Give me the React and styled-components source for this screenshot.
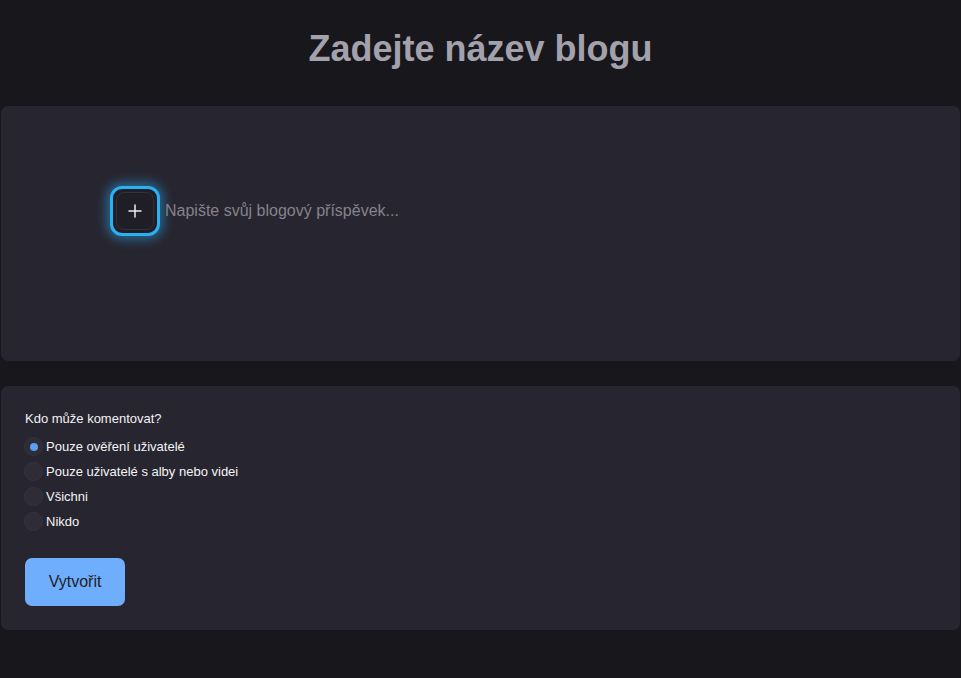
import React, { useState } from 'react';
import styled, { createGlobalStyle, css } from 'styled-components';

const GlobalStyle = createGlobalStyle`
    body {
        margin: 0;
        background: #18171c;
        font-family: "Liberation Sans", Arial, sans-serif;
    }
`;

const StyledPage = styled.div`
    min-height: 678px;
    padding: 0 1px;
    box-sizing: border-box;
`;
const StyledTitle = styled.h1`
    margin: 0;
    padding: 27px 0 36px;
    text-align: center;
    font-size: 36px;
    line-height: 43px;
    font-weight: 700;
    color: #a3a1ab;
`;
const StyledPanel = styled.div`
    background: #27252f;
    border-radius: 7px;
    box-sizing: border-box;
    ${props => props.editor && css`
        height: 255px;
        padding: 80px 0 0 109px;
        margin-bottom: 25px;
    `}
    ${props => props.settings && css`
        padding: 25px 24px 24px 24px;
    `}
`;
const StyledEditorRow = styled.div`
    display: flex;
    align-items: center;
    gap: 5px;
`;
const StyledAddButton = styled.button`
    width: 50px;
    height: 50px;
    box-sizing: border-box;
    padding: 3px;
    border: 3px solid #2bb0f2;
    border-radius: 12px;
    background: #1f1e26;
    box-shadow: 0 0 12px 3px rgba(41, 170, 240, 0.55);
    display: flex;
    cursor: pointer;
`;
const StyledAddInner = styled.span`
    flex: 1;
    display: flex;
    align-items: center;
    justify-content: center;
    border: 1px solid #33323b;
    border-radius: 8px;
    background: #1f1e26;
`;
const StyledPlaceholder = styled.span`
    font-size: 16px;
    color: #85838c;
`;
const StyledQuestion = styled.div`
    font-size: 13px;
    line-height: 16px;
    color: #f2f2f4;
    margin-bottom: 10px;
`;
const StyledOptions = styled.div`
    display: flex;
    flex-direction: column;
    gap: 6px;
    margin-bottom: 27px;
`;
const StyledOption = styled.label`
    display: flex;
    align-items: center;
    gap: 3px;
    margin-left: -1px;
    font-size: 13px;
    color: #f4f4f6;
    cursor: pointer;
`;
const StyledRadio = styled.span`
    width: 19px;
    height: 19px;
    box-sizing: border-box;
    border-radius: 50%;
    border: 1px solid #35333d;
    background: #2e2c36;
    display: flex;
    align-items: center;
    justify-content: center;
    &::after {
        content: '';
        width: 8px;
        height: 8px;
        border-radius: 50%;
        background: ${props => props.checked ? '#5c9df4' : 'transparent'};
    }
`;
const StyledSubmit = styled.button`
    width: 100px;
    height: 48px;
    border: none;
    border-radius: 7px;
    background: #6eaefc;
    color: #1f1e26;
    font-family: "Liberation Sans", Arial, sans-serif;
    font-size: 16px;
    cursor: pointer;
`;

const options = [
    'Pouze ověření uživatelé',
    'Pouze uživatelé s alby nebo videi',
    'Všichni',
    'Nikdo',
];

export default function App() {
    const [selected, setSelected] = useState(0);

    return (
        <StyledPage>
            <GlobalStyle />
            <StyledTitle>Zadejte název blogu</StyledTitle>

            <StyledPanel editor>
                <StyledEditorRow>
                    <StyledAddButton aria-label='add'>
                        <StyledAddInner>
                            <svg width='14' height='14' viewBox='0 0 14 14'>
                                <path d='M7 1v12M1 7h12' stroke='#ececf0' strokeWidth='1.5' strokeLinecap='round' />
                            </svg>
                        </StyledAddInner>
                    </StyledAddButton>
                    <StyledPlaceholder>Napište svůj blogový příspěvek...</StyledPlaceholder>
                </StyledEditorRow>
            </StyledPanel>

            <StyledPanel settings>
                <StyledQuestion>Kdo může komentovat?</StyledQuestion>
                <StyledOptions>
                    {options.map((text, i) => (
                        <StyledOption key={text} onClick={() => setSelected(i)}>
                            <StyledRadio checked={selected === i} />
                            {text}
                        </StyledOption>
                    ))}
                </StyledOptions>
                <StyledSubmit>Vytvořit</StyledSubmit>
            </StyledPanel>
        </StyledPage>
    )
}
